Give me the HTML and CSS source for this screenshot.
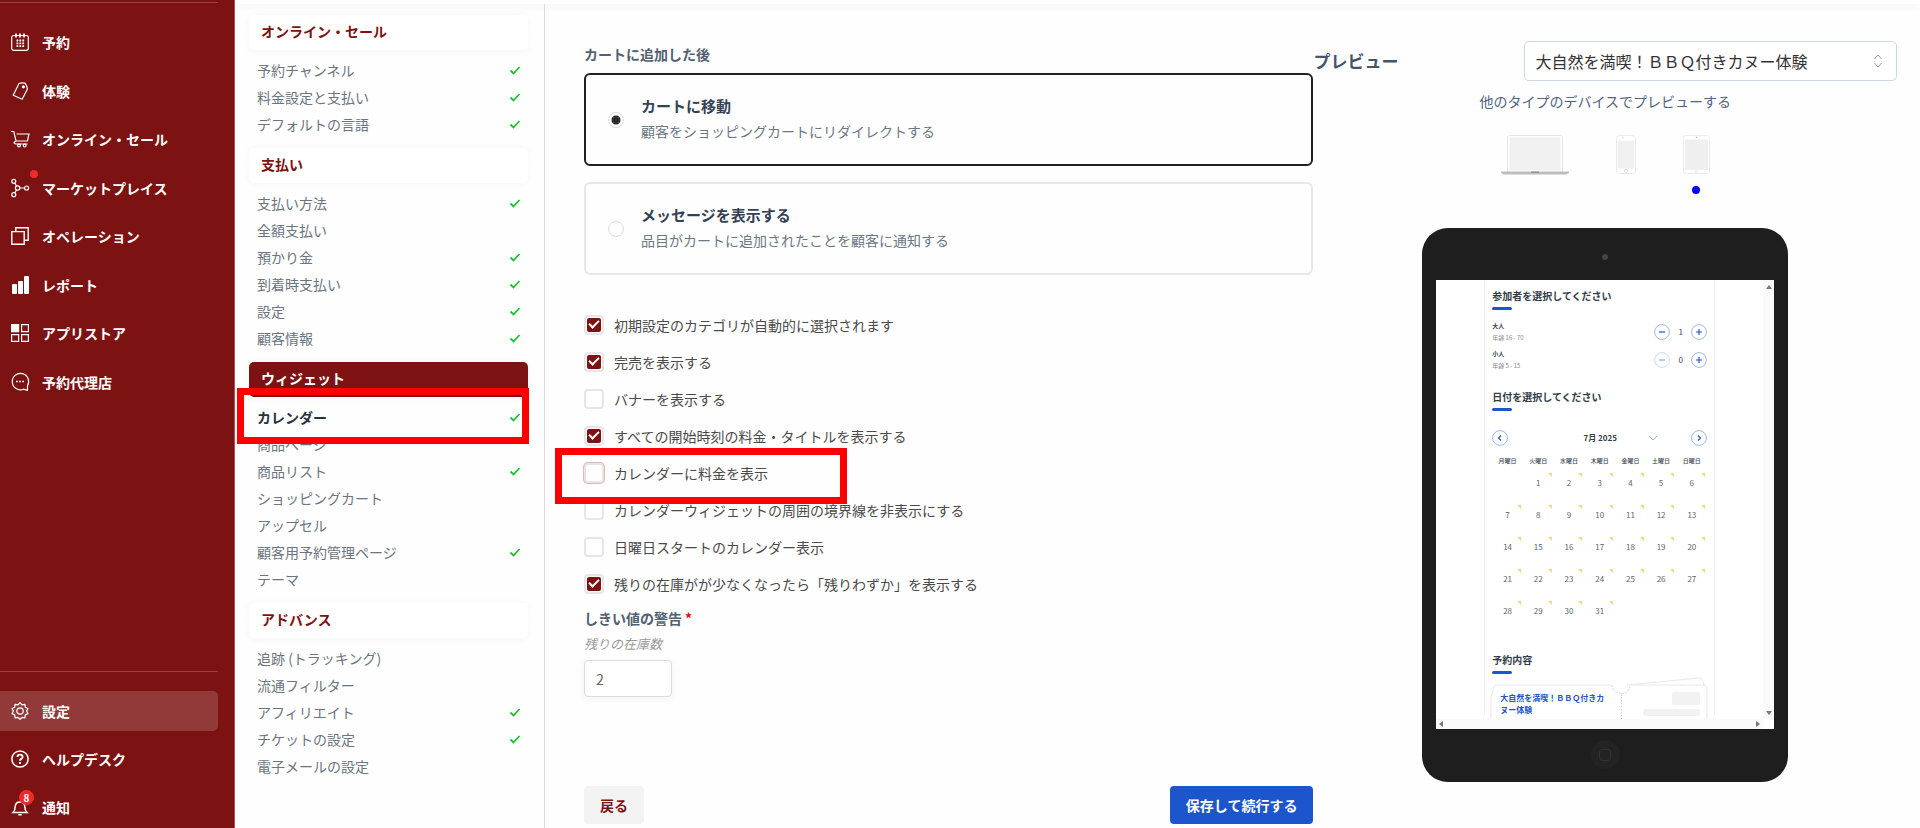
FILE: index.html
```html
<!DOCTYPE html>
<html lang="ja">
<head>
    <meta charset="UTF-8">
    <meta name="viewport" content="width=device-width, initial-scale=1.0">
    <title>カレンダー設定</title>
    <link rel="stylesheet" href="styles.css">
</head>
<body>
    <!-- Shared icons -->
    <svg class="sprite" aria-hidden="true">
        <symbol id="check" viewBox="0 0 12 12"><path d="M1.5 6.5l3 3 6-6.5" fill="none" stroke="#1cc42c" stroke-width="1.8"/></symbol>
        <symbol id="minus" viewBox="0 0 16 16"><circle cx="8" cy="8" r="7.4" fill="none" stroke="#8fb0ea" stroke-width=".9"/><path d="M5 8h6" stroke="#1d55cc" stroke-width="1.2"/></symbol>
        <symbol id="plus" viewBox="0 0 16 16"><circle cx="8" cy="8" r="7.4" fill="none" stroke="#8fb0ea" stroke-width=".9"/><path d="M5 8h6M8 5v6" stroke="#1d55cc" stroke-width="1.2"/></symbol>
    </svg>

    <!-- Main menu -->
    <aside class="sidebar">
        <nav class="menu">
            <a href="#"><svg class="icon" viewBox="0 0 18 18"><rect x=".7" y="2.5" width="16.6" height="14.8" rx="2"/><path d="M5 .5v4M9 .5v4M13 .5v4" stroke-width="1.8"/><path d="M5.5 7.5h7.6M5.5 10.3h7.6M5.5 13.1h7.6" stroke-width="1.8" stroke-dasharray="1.8 1.1"/></svg>予約</a>
            <a href="#"><svg class="icon" viewBox="0 0 18 18"><path d="M8 1.6Q10 .4 14 1.2Q16.5 4.5 16.4 7L11.2 17.2L2.2 13.2Z" stroke-linejoin="round"/><circle cx="12.4" cy="4.8" r="1" fill="#fff"/></svg>体験</a>
            <a href="#"><svg class="icon" viewBox="0 0 18 18"><path d="M0 1.5h2.8L5 11h11.5L18 4H5.5M5 11L3 12.5Q3 14 5 14h11.5"/><circle cx="8" cy="15.6" r="1.4"/><circle cx="13.7" cy="15.6" r="1.4"/></svg>オンライン・セール</a>
            <a href="#"><svg class="icon" viewBox="0 0 18 18"><circle cx="2.8" cy="2.3" r="2"/><circle cx="2.8" cy="15.7" r="2"/><circle cx="6.6" cy="9" r="2.2"/><circle cx="15.6" cy="9" r="2"/><path d="M3.8 4l1.7 3.1M3.8 14l1.7-3.1M8.8 9h4.8"/></svg><i class="dot"></i>マーケットプレイス</a>
            <a href="#"><svg class="icon" viewBox="0 0 18 18"><path d="M.8 4.6h12.4v12.6H.8zM4.8 4.6V.8h12.4v12.4h-4" stroke-width="1.4"/></svg>オペレーション</a>
            <a href="#"><svg class="icon" viewBox="0 0 18 18"><g fill="#fff" stroke="none"><rect x="1" y="8" width="5" height="10" rx="1"/><rect x="7" y="5" width="5" height="13" rx="1"/><rect x="13" y="0" width="5" height="18" rx="1"/></g></svg>レポート</a>
            <a href="#"><svg class="icon" viewBox="0 0 18 18"><path fill="#fff" d="M.6.6h7v7h-7z"/><path d="M10.6.6h6.8v7h-6.8zM.6 10.6h7v6.8h-7zM10.6 10.6h6.8v6.8h-6.8z"/></svg>アプリストア</a>
            <a href="#"><svg class="icon" viewBox="0 0 18 18"><path d="M16.5 17.3v-4.5A8.2 8.2 0 1 0 12.5 16.2z" stroke-linejoin="round"/><path d="M5 8.5h8" stroke-width="1.7" stroke-dasharray="1.8 1.3"/></svg>予約代理店</a>
        </nav>
        <nav class="menu menu-bottom">
            <a href="#" class="current"><svg class="icon" viewBox="0 0 18 18"><path d="M9 .7l2 2.1 2.9-.5.4 2.9 2.6 1.3-1.3 2.5 1.3 2.6-2.6 1.3-.4 2.9-2.9-.5-2 2-2-2-2.9.5-.4-2.9-2.6-1.3L2.4 9 1.1 6.5l2.6-1.3.4-2.9 2.9.5z" stroke-linejoin="round"/><circle cx="9" cy="9" r="3.2"/></svg>設定</a>
            <a href="#"><svg class="icon" viewBox="0 0 18 18"><circle cx="9" cy="9" r="8.1" stroke-width="1.5"/><path d="M6.4 7Q6.5 4.6 9 4.6T11.6 7Q11.5 8.2 10.2 8.9Q9 9.5 9 10.8M9 12v1.9" stroke-width="1.9"/></svg>ヘルプデスク</a>
            <a href="#"><svg class="icon" viewBox="0 0 18 18"><path d="M2 14.5Q4.2 12.5 4.2 8.5Q4.5 4 9 4T13.8 8.5Q13.8 12.5 16 14.5ZM7.3 16.7h3.4" stroke-width="1.5"/></svg><span class="badge">8</span>通知</a>
        </nav>
    </aside>

    <div class="content">
        <div class="topbar"></div>
        <div class="columns">

            <!-- Settings menu -->
            <nav class="subnav">
                <h2>オンライン・セール</h2>
                <ul>
                    <li><a href="#">予約チャンネル</a><svg class="tick"><use href="#check"/></svg></li>
                    <li><a href="#">料金設定と支払い</a><svg class="tick"><use href="#check"/></svg></li>
                    <li><a href="#">デフォルトの言語</a><svg class="tick"><use href="#check"/></svg></li>
                </ul>
                <h2>支払い</h2>
                <ul>
                    <li><a href="#">支払い方法</a><svg class="tick"><use href="#check"/></svg></li>
                    <li><a href="#">全額支払い</a></li>
                    <li><a href="#">預かり金</a><svg class="tick"><use href="#check"/></svg></li>
                    <li><a href="#">到着時支払い</a><svg class="tick"><use href="#check"/></svg></li>
                    <li><a href="#">設定</a><svg class="tick"><use href="#check"/></svg></li>
                    <li><a href="#">顧客情報</a><svg class="tick"><use href="#check"/></svg></li>
                </ul>
                <h2 class="open">ウィジェット</h2>
                <ul>
                    <li class="active"><a href="#">カレンダー</a><svg class="tick"><use href="#check"/></svg><span class="mark mark-nav"></span></li>
                    <li><a href="#">商品ページ</a></li>
                    <li><a href="#">商品リスト</a><svg class="tick"><use href="#check"/></svg></li>
                    <li><a href="#">ショッピングカート</a></li>
                    <li><a href="#">アップセル</a></li>
                    <li><a href="#">顧客用予約管理ページ</a><svg class="tick"><use href="#check"/></svg></li>
                    <li><a href="#">テーマ</a></li>
                </ul>
                <h2>アドバンス</h2>
                <ul>
                    <li><a href="#">追跡 (トラッキング)</a></li>
                    <li><a href="#">流通フィルター</a></li>
                    <li><a href="#">アフィリエイト</a><svg class="tick"><use href="#check"/></svg></li>
                    <li><a href="#">チケットの設定</a><svg class="tick"><use href="#check"/></svg></li>
                    <li><a href="#">電子メールの設定</a></li>
                </ul>
            </nav>

            <main class="main">
                <!-- Calendar settings form -->
                <form class="form">
                    <fieldset class="choices">
                        <legend class="field-label">カートに追加した後</legend>
                        <label class="choice">
                            <input type="radio" name="after" checked>
                            <span><strong>カートに移動</strong><small>顧客をショッピングカートにリダイレクトする</small></span>
                        </label>
                        <label class="choice">
                            <input type="radio" name="after">
                            <span><strong>メッセージを表示する</strong><small>品目がカートに追加されたことを顧客に通知する</small></span>
                        </label>
                    </fieldset>

                    <div class="options">
                        <label class="option"><input type="checkbox" checked>初期設定のカテゴリが自動的に選択されます</label>
                        <label class="option"><input type="checkbox" checked>完売を表示する</label>
                        <label class="option"><input type="checkbox">バナーを表示する</label>
                        <label class="option"><input type="checkbox" checked>すべての開始時刻の料金・タイトルを表示する</label>
                        <label class="option"><input type="checkbox" class="focused">カレンダーに料金を表示<span class="mark mark-option"></span></label>
                        <label class="option"><input type="checkbox">カレンダーウィジェットの周囲の境界線を非表示にする</label>
                        <label class="option"><input type="checkbox">日曜日スタートのカレンダー表示</label>
                        <label class="option"><input type="checkbox" checked>残りの在庫がが少なくなったら「残りわずか」を表示する</label>
                    </div>

                    <div class="threshold">
                        <label class="field-label" for="threshold">しきい値の警告<span class="required">*</span></label>
                        <p class="hint">残りの在庫数</p>
                        <input type="text" id="threshold" value="2" inputmode="numeric">
                    </div>

                    <div class="actions">
                        <button type="button" class="btn btn-back">戻る</button>
                        <button type="submit" class="btn btn-save">保存して続行する</button>
                    </div>
                </form>

                <!-- Preview -->
                <section class="preview">
                    <div class="preview-head">
                        <h1><label for="product">プレビュー</label></h1>
                        <div class="select">
                            <select id="product">
                                <option>大自然を満喫！ＢＢＱ付きカヌー体験</option>
                            </select>
                            <svg class="select-arrow" viewBox="0 0 10 14"><path d="M1.5 5L5 1l3.5 4M1.5 9L5 13l3.5-4" fill="none" stroke="#8b9bb0"/></svg>
                        </div>
                    </div>
                    <p class="preview-note">他のタイプのデバイスでプレビューする</p>
                    <div class="devices">
                        <button type="button" aria-label="ノートパソコン">
                            <svg width="68" height="40" viewBox="0 0 68 40"><rect x="6.5" y=".5" width="55" height="37" rx="2" fill="#fff" stroke="#e6e6e6"/><path fill="#f0f0f0" d="M8.5 2.5h51v33h-51z"/><path fill="#bdbdbd" d="M0 36.5h68v1.5l-3 1.5H3L0 38z"/><path fill="#8d8d8d" d="M30 36.5h8v1.3h-8z"/></svg>
                        </button>
                        <button type="button" aria-label="スマートフォン">
                            <svg width="20" height="40" viewBox="0 0 20 40"><rect x=".5" y=".5" width="19" height="38" rx="3" fill="#fff" stroke="#ececec"/><path fill="#f0f0f0" d="M1.5 5.5h17v28h-17z"/><circle cx="7" cy="2.8" r=".6" fill="#bbb"/><circle cx="10" cy="36" r="1.7" fill="none" stroke="#ccc" stroke-width=".6"/></svg>
                        </button>
                        <button type="button" class="selected" aria-label="タブレット">
                            <svg width="27" height="40" viewBox="0 0 27 40"><rect x=".5" y=".5" width="26" height="38" rx="2" fill="#fff" stroke="#ececec"/><path fill="#efefef" d="M2 4.5h23v30.5H2z"/><circle cx="13.5" cy="2.3" r=".8" fill="#bbb"/><circle cx="13.5" cy="36.7" r="1.3" fill="none" stroke="#ddd" stroke-width=".6"/></svg>
                        </button>
                    </div>

                    <div class="tablet">
                        <span class="camera"></span>
                        <div class="screen">
                            <div class="screen-body">
                                <div class="widget">
                                    <h3>参加者を選択してください</h3>
                                    <div class="guest">
                                        <p><b>大人</b>年齢 16 - 70</p>
                                        <div class="stepper">
                                            <button type="button" aria-label="減らす"><svg class="round"><use href="#minus"/></svg></button>
                                            <span>1</span>
                                            <button type="button" aria-label="増やす"><svg class="round"><use href="#plus"/></svg></button>
                                        </div>
                                    </div>
                                    <div class="guest">
                                        <p><b>小人</b>年齢 5 - 15</p>
                                        <div class="stepper">
                                            <button type="button" aria-label="減らす" disabled><svg class="round"><use href="#minus"/></svg></button>
                                            <span>0</span>
                                            <button type="button" aria-label="増やす"><svg class="round"><use href="#plus"/></svg></button>
                                        </div>
                                    </div>

                                    <h3 class="date-title">日付を選択してください</h3>
                                    <div class="month">
                                        <button type="button" aria-label="前の月"><svg class="round" viewBox="0 0 16 16"><circle cx="8" cy="8" r="7.4" fill="none" stroke="#8fb0ea" stroke-width=".9"/><path d="M9 5.5L6.5 8 9 10.5" fill="none" stroke="#1d55cc" stroke-width="1.2"/></svg></button>
                                        <span class="month-name">7月 2025</span>
                                        <svg class="month-arrow" viewBox="0 0 10 6"><path d="M1 1l4 4 4-4" fill="none" stroke="#8fb0ea"/></svg>
                                        <button type="button" aria-label="次の月"><svg class="round" viewBox="0 0 16 16"><circle cx="8" cy="8" r="7.4" fill="none" stroke="#8fb0ea" stroke-width=".9"/><path d="M7 5.5L9.5 8 7 10.5" fill="none" stroke="#1d55cc" stroke-width="1.2"/></svg></button>
                                    </div>
                                    <table class="calendar">
                                        <thead>
                                            <tr><th>月曜日</th><th>火曜日</th><th>水曜日</th><th>木曜日</th><th>金曜日</th><th>土曜日</th><th>日曜日</th></tr>
                                        </thead>
                                        <tbody>
                                            <tr><td></td><td>1</td><td>2</td><td>3</td><td>4</td><td>5</td><td>6</td></tr>
                                            <tr><td>7</td><td>8</td><td>9</td><td>10</td><td>11</td><td>12</td><td>13</td></tr>
                                            <tr><td>14</td><td>15</td><td>16</td><td>17</td><td>18</td><td>19</td><td>20</td></tr>
                                            <tr><td>21</td><td>22</td><td>23</td><td>24</td><td>25</td><td>26</td><td>27</td></tr>
                                            <tr><td>28</td><td>29</td><td>30</td><td>31</td><td></td><td></td><td></td></tr>
                                        </tbody>
                                    </table>

                                    <h3 class="summary-title">予約内容</h3>
                                    <div class="ticket">
                                        <svg class="ticket-shape" width="220" height="46" viewBox="0 0 220 46" fill="none" stroke="#e8e8e8"><path d="M138 8L210 1Q214 1 215 8"/><path d="M2 46V19Q4 17 4 13V12Q4 8 8 8H122M142 8H214Q218 8 218 12V46"/><path d="M123 8Q124 16 132 16.5T141 8M132.5 17V46" stroke="#ccc" stroke-dasharray="1.5 1.5"/></svg>
                                        <p>大自然を満喫！ＢＢＱ付きカヌー体験</p>
                                        <div class="ticket-side"><i></i><i></i></div>
                                    </div>
                                </div>
                            </div>
                            <div class="scroll-y"><svg viewBox="0 0 6 4"><path d="M0 4l3-4 3 4z"/></svg><svg viewBox="0 0 6 4"><path d="M0 0l3 4 3-4z"/></svg></div>
                            <div class="scroll-x"><svg viewBox="0 0 4 6"><path d="M4 0L0 3l4 3z"/></svg><svg viewBox="0 0 4 6"><path d="M0 0l4 3-4 3z"/></svg></div>
                        </div>
                        <span class="home"></span>
                    </div>
                </section>
            </main>
        </div>
    </div>
</body>
</html>
```

FILE: styles.css
```css
/* General Styles */
* {
    box-sizing: border-box;
}

body {
    font-family: "Noto Sans CJK JP", "Noto Sans", sans-serif;
    font-size: 14px;
    line-height: 20px;
    color: #4a4a4a;
    background-color: #fefefe;
    margin: 0;
    display: flex;
    min-height: 100vh;
}

h1, h2, h3, p, ul, fieldset, legend {
    margin: 0;
    padding: 0;
    border: none;
}

a {
    color: inherit;
    text-decoration: none;
}

button, input, select {
    font: inherit;
    color: inherit;
    margin: 0;
}

button {
    border: none;
    background: none;
    padding: 0;
    cursor: pointer;
}

.sprite {
    position: absolute;
    width: 0;
    height: 0;
}

/* Main menu */
.sidebar {
    flex: 0 0 235px;
    display: flex;
    flex-direction: column;
    justify-content: space-between;
    height: 100vh;
    padding: 2px 16px 0 0;
    background-color: #7c1212;
    border-right: 1px solid #a55;
    color: #fff;
    font-weight: 700;
}

.menu {
    display: flex;
    flex-direction: column;
    justify-content: space-between;
    height: 400px;
    padding-top: 19px;
    border-top: 1px solid #964141;
}

.menu-bottom {
    justify-content: flex-start;
    gap: 8px;
    height: auto;
    padding-bottom: 1px;
}

.menu a {
    position: relative;
    display: flex;
    align-items: center;
    gap: 13px;
    height: 40px;
    padding-left: 11px;
    border-radius: 0 5px 5px 0;
}

.menu .current {
    background-color: #923a3a;
}

.icon {
    width: 18px;
    height: 18px;
    fill: none;
    stroke: #fff;
    stroke-width: 1.2;
    overflow: visible;
}

.dot {
    position: absolute;
    left: 30px;
    top: 2px;
    width: 8px;
    height: 8px;
    border-radius: 50%;
    background-color: #ee2a2a;
}

.badge {
    position: absolute;
    left: 19px;
    top: 3px;
    width: 15px;
    height: 15px;
    border-radius: 50%;
    background-color: #ee2a2a;
    font-size: 10px;
    line-height: 15px;
    text-align: center;
}

/* Content */
.content {
    flex: 1;
    display: flex;
    flex-direction: column;
    min-width: 0;
}

.topbar {
    height: 4px;
    background-color: #fff;
    box-shadow: 0 2px 8px rgba(0, 0, 0, 0.06);
}

.columns {
    flex: 1;
    display: flex;
}

/* Settings menu */
.subnav {
    flex: 0 0 310px;
    padding: 11px 16px 0 14px;
    border-right: 1px solid #dcdcdc;
    color: #6b7480;
}

.subnav h2 {
    height: 35px;
    padding-left: 12px;
    border-radius: 5px;
    background-color: #fff;
    box-shadow: 0 1px 8px rgba(0, 0, 0, 0.04);
    color: #7c1212;
    font-size: 14px;
    font-weight: 700;
    line-height: 33px;
}

.subnav .open {
    background-color: #7c1212;
    color: #fff;
}

.subnav ul {
    list-style: none;
    padding: 6px 7px 11px 8px;
}

.subnav li {
    position: relative;
    display: flex;
    justify-content: space-between;
    align-items: center;
    height: 27px;
}

.subnav .active {
    color: #26323e;
    font-weight: 700;
}

.tick {
    width: 12px;
    height: 12px;
}

/* Red highlight frames */
.mark {
    position: absolute;
    z-index: 1;
    border: 7px solid #f00;
    pointer-events: none;
}

.mark-nav {
    inset: -15px -8px -14px -20px;
}

.mark-option {
    top: -6px;
    left: -29px;
    width: 292px;
    height: 56px;
}

/* Form */
.main {
    flex: 1;
    display: grid;
    grid-template-columns: 5fr 4fr;
    padding: 0 23px 4px 39px;
}

.form {
    display: flex;
    flex-direction: column;
    padding-top: 40px;
}

.choices {
    display: flex;
    flex-direction: column;
    gap: 16px;
}

.field-label {
    display: block;
    color: #526170;
    font-weight: 600;
}

.choices .field-label {
    padding-bottom: 9px;
}

.choice {
    display: flex;
    align-items: center;
    gap: 17px;
    padding: 20px 22px;
    border: 2px solid #e8e8e8;
    border-radius: 6px;
}

.choice:has(:checked) {
    border-color: #222;
}

.choice input {
    appearance: none;
    width: 16px;
    height: 16px;
    border: 1px solid #dcdcdc;
    border-radius: 50%;
    background-color: #fff;
}

.choice input:checked {
    background: radial-gradient(circle, #2c2c2c 4px, #fff 5px);
}

.choice span {
    padding-bottom: 1px;
}

.choice strong, .choice small {
    display: block;
}

.choice strong {
    margin-bottom: 3px;
    color: #334155;
    font-size: 15px;
    line-height: 22px;
}

.choice small {
    color: #6b7885;
    font-size: 14px;
    line-height: 23px;
}

.options {
    margin-top: 31px;
}

.option {
    position: relative;
    display: flex;
    align-items: center;
    gap: 10px;
    height: 37px;
}

.option input {
    appearance: none;
    display: grid;
    place-items: center;
    width: 20px;
    height: 20px;
    border: 2px solid #e6e6e6;
    border-radius: 4px;
    background-color: #fff;
}

.option input:checked::before, .option input:checked::after {
    content: "";
    grid-area: 1 / 1;
}

.option input:checked::before {
    width: 14px;
    height: 14px;
    border-radius: 2px;
    background-color: #7c1212;
}

.option input:checked::after {
    width: 8px;
    height: 4px;
    margin-bottom: 3px;
    border-left: 2px solid #fff;
    border-bottom: 2px solid #fff;
    transform: rotate(-45deg);
}

.option .focused {
    box-shadow: 0 0 0 1px #e5b5b5;
}

.threshold {
    margin-top: 6px;
}

.required {
    color: #f00;
    padding-left: 3px;
}

.hint {
    margin: 6px 0;
    color: #999;
    font-size: 13px;
    font-style: italic;
}

.threshold input {
    display: block;
    width: 88px;
    height: 37px;
    padding: 0 11px;
    border: 1px solid #dcdcdc;
    border-radius: 4px;
    box-shadow: 0 2px 8px rgba(0, 0, 0, 0.05);
    color: #666;
}

.actions {
    display: flex;
    justify-content: space-between;
    margin-top: auto;
}

.btn {
    height: 38px;
    padding: 0 16px;
    border-radius: 4px;
    font-weight: 700;
}

.btn-back {
    background-color: #f3f3f3;
    color: #7c1212;
}

.btn-save {
    background-color: #1d55cc;
    color: #fff;
}

/* Preview */
.preview {
    display: flex;
    flex-direction: column;
    align-items: center;
    padding-top: 37px;
}

.preview-head {
    display: flex;
    justify-content: space-between;
    align-items: center;
    width: 100%;
}

.preview h1 {
    color: #475569;
    font-size: 17px;
}

.select {
    position: relative;
    flex: 0 0 64%;
}

.select select {
    appearance: none;
    width: 100%;
    height: 40px;
    padding: 0 30px 0 11px;
    border: 1px solid #cbd8e8;
    border-radius: 5px;
    background-color: #fff;
    color: #333;
    font-size: 16px;
}

.select-arrow {
    position: absolute;
    right: 14px;
    top: 13px;
    width: 10px;
    height: 14px;
    pointer-events: none;
}

.preview-note {
    margin-top: 10px;
    color: #526480;
}

.devices {
    display: flex;
    gap: 47px;
    margin-top: 24px;
}

.devices button, .devices svg {
    display: block;
}

.devices button {
    position: relative;
}

.devices .selected::after {
    content: "";
    position: absolute;
    left: 9px;
    top: 51px;
    width: 8px;
    height: 8px;
    border-radius: 50%;
    background-color: #00f;
}

/* Tablet */
.tablet {
    display: flex;
    flex-direction: column;
    align-items: center;
    width: 366px;
    margin-top: 53px;
    padding: 26px 14px 13px;
    border-radius: 26px;
    background-color: #1e1e1e;
}

.camera {
    width: 6px;
    height: 6px;
    border-radius: 50%;
    background-color: #444;
}

.home {
    display: grid;
    place-items: center;
    width: 29px;
    height: 29px;
    margin-top: 11px;
    border-radius: 50%;
    background-color: #232323;
}

.home::after {
    content: "";
    width: 10px;
    height: 10px;
    border: 1px solid #333;
    border-radius: 3px;
}

.screen {
    display: grid;
    grid-template-columns: 1fr 11px;
    grid-template-rows: 439px 10px;
    width: 100%;
    margin-top: 20px;
    background-color: #fff;
}

.screen-body {
    overflow: hidden;
}

.widget {
    width: 231px;
    margin-left: 48px;
    padding: 8px 7px 0;
    border: solid #f0f0f0;
    border-width: 0 1px;
    color: #3a4653;
    font-size: 8px;
    line-height: 12px;
}

.widget h3 {
    color: #333d48;
    font-size: 10px;
    line-height: 16px;
}

.widget h3::after {
    content: "";
    display: block;
    width: 20px;
    height: 3px;
    margin-top: 3px;
    border-radius: 2px;
    background-color: #1d55cc;
}

.widget button, .round {
    display: block;
}

.round {
    width: 16px;
    height: 16px;
}

.guest {
    display: flex;
    justify-content: space-between;
    align-items: center;
    height: 28px;
    font-size: 6px;
    color: #888;
}

.widget h3 + .guest {
    margin-top: 8px;
}

.guest b {
    display: block;
    color: #333d48;
}

.stepper {
    display: flex;
    align-items: center;
    color: #3a4653;
    font-size: 8px;
}

.stepper span {
    width: 21px;
    text-align: center;
}

.stepper button:disabled {
    opacity: 0.5;
}

.widget .date-title {
    margin-top: 15px;
}

.month {
    display: flex;
    align-items: center;
    margin-top: 19px;
}

.month-name {
    margin-left: auto;
    padding-left: 42px;
    color: #333d48;
    font-weight: 700;
}

.month-arrow {
    width: 10px;
    height: 6px;
    margin: 0 auto 0 31px;
}

.calendar {
    width: 100%;
    margin-top: 9px;
    border-collapse: collapse;
    table-layout: fixed;
    text-align: center;
}

.calendar th {
    height: 12px;
    padding: 0;
    font-size: 6px;
    font-weight: 500;
    white-space: nowrap;
}

.calendar td {
    position: relative;
    height: 32px;
    padding: 0;
    color: #5b6570;
}

.calendar td:not(:empty)::after {
    content: "";
    position: absolute;
    top: 6px;
    right: 2px;
    border: 2px solid transparent;
    border-top-color: #f5d67c;
    border-right-color: #f5d67c;
}

.widget .summary-title {
    margin-top: 25px;
}

.ticket {
    position: relative;
    display: flex;
    justify-content: space-between;
    margin-top: 11px;
    padding: 7px 7px 0 8px;
}

.ticket-shape {
    position: absolute;
    left: -3px;
    top: -8px;
}

.ticket p {
    width: 110px;
    color: #1d55cc;
    font-weight: 700;
}

.ticket-side {
    display: flex;
    flex-direction: column;
    align-items: flex-end;
    gap: 4px;
}

.ticket-side i {
    width: 57px;
    height: 7px;
    border-radius: 2px;
    background-color: #f2f2f2;
}

.ticket-side i:first-child {
    width: 28px;
    height: 13px;
}

.scroll-y, .scroll-x {
    display: flex;
    justify-content: space-between;
    align-items: center;
    background-color: #fafafa;
    fill: #777;
}

.scroll-y {
    flex-direction: column;
    padding: 5px 0 4px;
}

.scroll-x {
    padding: 0 3px;
}

.scroll-y svg {
    width: 6px;
    height: 4px;
}

.scroll-x svg {
    width: 4px;
    height: 6px;
}
```
